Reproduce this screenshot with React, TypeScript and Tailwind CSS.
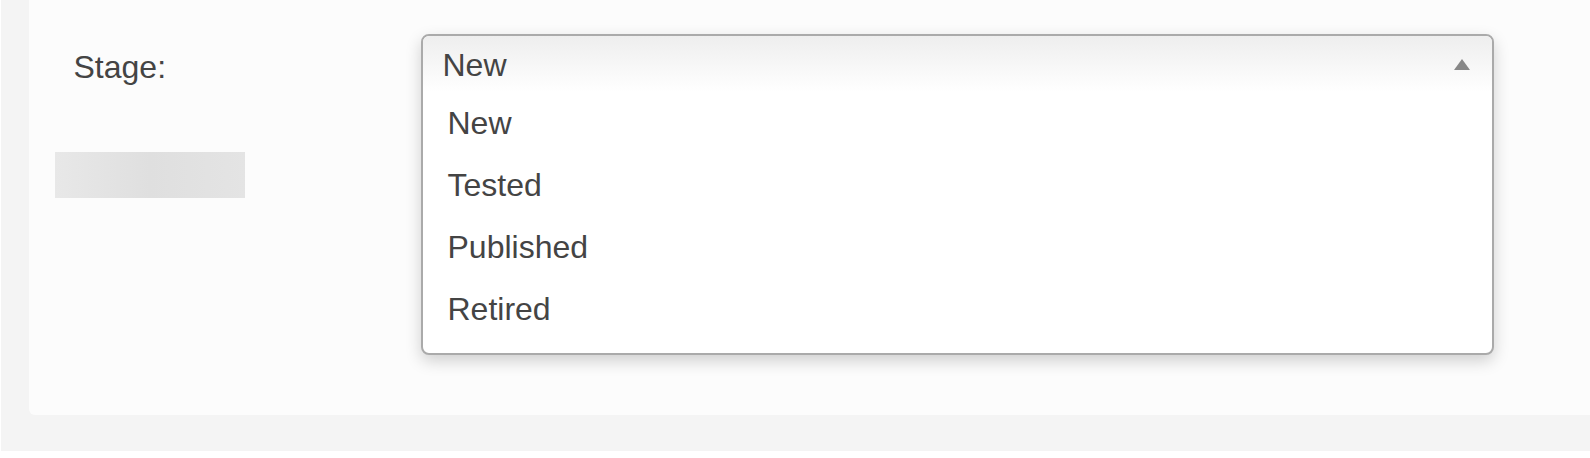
import React from 'react';

const stages = ['New', 'Tested', 'Published', 'Retired'];

function StageSelect() {
  return (
    <div className="self-start w-[1073px] shrink-0 rounded-[8px] border-2 border-[#aaaaaa] bg-white overflow-hidden shadow-[0_6px_16px_rgba(0,0,0,0.18)]">
      <div className="h-[56px] flex items-center justify-between pl-[19.5px] pr-[22.5px] bg-gradient-to-b from-[#eeeeee] to-white">
        <span className="mt-[3px]">New</span>
        <span className="w-0 h-0 border-x-[8px] border-x-transparent border-b-[11px] border-b-[#888888]" />
      </div>
      <ul className="pb-[13px]">
        {stages.map((s) => (
          <li key={s} className="h-[62px] leading-[62px] pl-[24.5px]">
            {s}
          </li>
        ))}
      </ul>
    </div>
  );
}

export default function App() {
  return (
    <div className="w-[1590px] h-[458px] bg-white overflow-hidden font-['Liberation_Sans',Arial,sans-serif] text-[32px] leading-[1.15] text-[#444444]">
      <div className="ml-px h-[451px] bg-[#f4f4f4] pl-[28px]">
        <div className="h-[415px] bg-[#fcfcfc] rounded-bl-[6px] pl-[26px] pt-[34px] flex items-start">
          <div className="w-[366px] shrink-0 flex flex-col">
            <label className="ml-[18.5px] mt-[15px]">Stage:</label>
            <div className="mt-[66px] w-[190px] h-[46px] bg-gradient-to-r from-[#e8e8e8] via-[#dfdfdf] to-[#e4e4e4]" />
          </div>
          <StageSelect />
        </div>
      </div>
    </div>
  );
}
